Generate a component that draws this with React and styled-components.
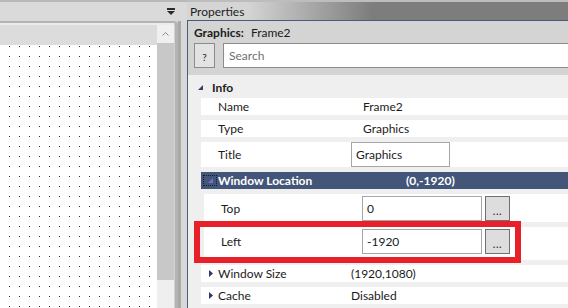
import React from "react";
import styled, { createGlobalStyle } from "styled-components";

const GlobalStyle = createGlobalStyle`
  html, body {
    margin: 0;
    padding: 0;
  }
  body {
    font-family: Lato, "Liberation Sans", sans-serif;
    font-size: 12px;
    color: #1b1b1b;
  }
  * {
    box-sizing: border-box;
  }
`;

const Screen = styled.div`
  width: 568px;
  height: 308px;
  display: flex;
  overflow: hidden;
  background: #d6d6d6;
`;

/* ---------- left dock (designer canvas) ---------- */

const Dock = styled.div`
  width: 187px;
  flex-shrink: 0;
  display: flex;
  flex-direction: column;
`;
const DockBar = styled.div`
  height: 21px;
  border-top: 2px solid #b9b9b9;
  background: #dadada;
  display: flex;
  align-items: center;
  justify-content: flex-end;
  padding-right: 12px;
`;
const DockBody = styled.div`
  flex: 1;
  display: flex;
  min-height: 0;
`;
const Frame = styled.div`
  width: 178px;
  display: flex;
  border-top: 2px solid #b3b3b3;
  border-right: 3px solid #b4b4b4;
  border-top-right-radius: 4px;
  background: #d2d2d2;
  padding-right: 1px;
`;
const Canvas = styled.div`
  width: 157px;
  display: flex;
  flex-direction: column;
  border-top: 2px solid #ececec;
`;
const CanvasHead = styled.div`
  height: 20px;
  background: #dcdcdc;
`;
const Dots = styled.svg`
  flex: 1;
  width: 157px;
  display: block;
  background: #fff;
`;
const VScroll = styled.div`
  width: 17px;
  display: flex;
  flex-direction: column;
  border-top: 2px solid #ececec;
`;
const ScrollUp = styled.div`
  height: 18px;
  background: #f0f0f0;
  display: flex;
  align-items: center;
  justify-content: center;
`;
const ScrollTrack = styled.div`
  flex: 1;
  background: #c8c8c8;
`;
const ScrollCorner = styled.div`
  height: 28px;
  background: #efefef;
`;
const Splitter = styled.div`
  width: 9px;
  border-left: 3px solid #a9a9a9;
  background: #d8d8d8;
`;

/* ---------- properties panel ---------- */

const Panel = styled.div`
  flex: 1;
  min-width: 0;
  display: flex;
  flex-direction: column;
`;
const Caption = styled.div`
  height: 20px;
  border-top: 2px solid #bdbdbd;
  padding-left: 3px;
  display: flex;
  align-items: center;
  color: #1e1e1e;
  background: linear-gradient(to right, #d5d5d5 0, #d5d5d5 60px, #7d7d7d 185px);
`;
const PanelBody = styled.div`
  flex: 1;
  display: flex;
  flex-direction: column;
  border-top: 1px solid #4b5a80;
  border-left: 1px solid #4b5a80;
  min-height: 0;
`;
const Header = styled.div`
  background: #d4d4d4;
  padding: 0 0 7px 6px;
`;
const ObjectLine = styled.div`
  height: 22px;
  display: flex;
  align-items: center;
  b {
    margin-right: 7px;
  }
`;
const SearchRow = styled.div`
  height: 25px;
  display: flex;
  gap: 8px;
`;
const HelpButton = styled.div`
  width: 21px;
  border: 1px solid #8c8c8c;
  background: #e3e3e3;
  font-size: 10px;
  display: flex;
  align-items: flex-end;
  justify-content: center;
  padding-bottom: 4px;
`;
const SearchBox = styled.div`
  flex: 1;
  background: #fff;
  border: 1px solid #8c8c8c;
  border-right: none;
  color: #6f6f6f;
  display: flex;
  align-items: center;
  padding-left: 5px;
`;

const Grid = styled.div`
  flex: 1;
  background: #efefef;
`;
const Category = styled.div`
  height: 23px;
  display: flex;
  align-items: center;
  padding-left: 10px;
  padding-top: 1px;
  font-weight: 700;
  svg {
    margin-right: 9px;
  }
`;
const Rows = styled.div`
  display: flex;
  flex-direction: column;
  gap: 5px;
`;
const Row = styled.div`
  position: relative;
  height: ${({ $h }) => $h}px;
  margin-left: ${({ $sub }) => ($sub ? 16 : 13)}px;
  display: flex;
  align-items: ${({ $top }) => ($top ? "flex-start" : "center")};
  padding-top: ${({ $top }) => ($top ? 2 : 0)}px;
  background: ${({ $selected }) => ($selected ? "#43567a" : "#fff")};
  color: ${({ $selected }) => ($selected ? "#fff" : "#1b1b1b")};
  font-weight: ${({ $selected }) => ($selected ? 700 : 400)};
`;
const Lead = styled.div`
  width: 17px;
  height: 100%;
  flex-shrink: 0;
  display: flex;
  align-items: center;
`;
const Label = styled.div`
  width: ${({ $w }) => $w - 17}px;
  flex-shrink: 0;
  line-height: ${({ $lh }) => ($lh ? `${$lh}px` : "normal")};
`;
const FocusBox = styled.div`
  margin-left: 2px;
  width: 14px;
  height: 11px;
  border: 1px dotted #16182a;
  display: flex;
  align-items: center;
  justify-content: center;
`;
const Field = styled.div`
  width: ${({ $w }) => $w}px;
  height: 25px;
  border: 1px solid #a6a6a6;
  background: #fff;
  display: flex;
  align-items: center;
  padding-left: 4px;
`;
const DotsButton = styled.div`
  width: 25px;
  height: 25px;
  margin-left: 3px;
  border: 1px solid #707070;
  background: #dddddd;
  display: flex;
  align-items: flex-end;
  justify-content: center;
  padding-bottom: 5px;
  font-size: 11px;
  line-height: 8px;
  letter-spacing: 0.5px;
`;
const Highlight = styled.div`
  position: absolute;
  left: -10px;
  top: -6px;
  width: 327px;
  height: 42px;
  border: 6px solid #e8202a;
  pointer-events: none;
`;

const DownRightTri = ({ color }) => (
  <svg width="5" height="5" viewBox="0 0 5 5">
    <polygon points="5,0 5,5 0,5" fill={color} />
  </svg>
);

const RightTri = () => (
  <svg width="4" height="7" viewBox="0 0 4 7" style={{ marginLeft: 8 }}>
    <polygon points="0,0 4,3.5 0,7" fill="#2f3566" />
  </svg>
);

const App = () => {
  return (
    <Screen>
      <GlobalStyle />
      <Dock>
        <DockBar>
          <svg width="8" height="7" viewBox="0 0 8 7">
            <rect x="0" y="0" width="8" height="2" fill="#2b2b2b" />
            <polygon points="0,3 8,3 4,7" fill="#2b2b2b" />
          </svg>
        </DockBar>
        <DockBody>
          <Frame>
            <Canvas>
              <CanvasHead />
              <Dots>
                <defs>
                  <pattern id="grid" width="10" height="10" patternUnits="userSpaceOnUse" x="9" y="1">
                    <rect width="1" height="1" fill="#2a2a2a" shapeRendering="crispEdges" />
                  </pattern>
                </defs>
                <rect width="100%" height="100%" fill="url(#grid)" />
              </Dots>
            </Canvas>
            <VScroll>
              <ScrollUp>
                <svg width="7" height="4" viewBox="0 0 7 4">
                  <polyline points="0.5,3.5 3.5,0.5 6.5,3.5" fill="none" stroke="#8a8a8a" strokeWidth="1" />
                </svg>
              </ScrollUp>
              <ScrollTrack />
              <ScrollCorner />
            </VScroll>
          </Frame>
          <Splitter />
        </DockBody>
      </Dock>

      <Panel>
        <Caption>Properties</Caption>
        <PanelBody>
          <Header>
            <ObjectLine>
              <b>Graphics:</b>
              Frame2
            </ObjectLine>
            <SearchRow>
              <HelpButton>?</HelpButton>
              <SearchBox>Search</SearchBox>
            </SearchRow>
          </Header>
          <Grid>
            <Category>
              <DownRightTri color="#3b3d6c" />
              Info
            </Category>
            <Rows>
              <Row $h={17}>
                <Lead />
                <Label $w={162}>Name</Label>
                Frame2
              </Row>
              <Row $h={17}>
                <Lead />
                <Label $w={162}>Type</Label>
                Graphics
              </Row>
              <Row $h={25}>
                <Lead />
                <Label $w={150}>Title</Label>
                <Field $w={99}>Graphics</Field>
              </Row>
              <Row $h={17} $selected>
                <Lead>
                  <FocusBox>
                    <DownRightTri color="#7270c8" />
                  </FocusBox>
                </Lead>
                <Label $w={205}>Window Location</Label>
                (0,-1920)
              </Row>
              <Row $h={28} $sub $top>
                <Lead />
                <Label $w={158} $lh={25}>Top</Label>
                <Field $w={120}>0</Field>
                <DotsButton>...</DotsButton>
              </Row>
              <Row $h={33} $sub $top>
                <Lead />
                <Label $w={158} $lh={25}>Left</Label>
                <Field $w={120}>-1920</Field>
                <DotsButton>...</DotsButton>
                <Highlight />
              </Row>
              <Row $h={17}>
                <Lead>
                  <RightTri />
                </Lead>
                <Label $w={150}>Window Size</Label>
                (1920,1080)
              </Row>
              <Row $h={17}>
                <Lead>
                  <RightTri />
                </Lead>
                <Label $w={150}>Cache</Label>
                Disabled
              </Row>
            </Rows>
          </Grid>
        </PanelBody>
      </Panel>
    </Screen>
  );
};

export default App;
